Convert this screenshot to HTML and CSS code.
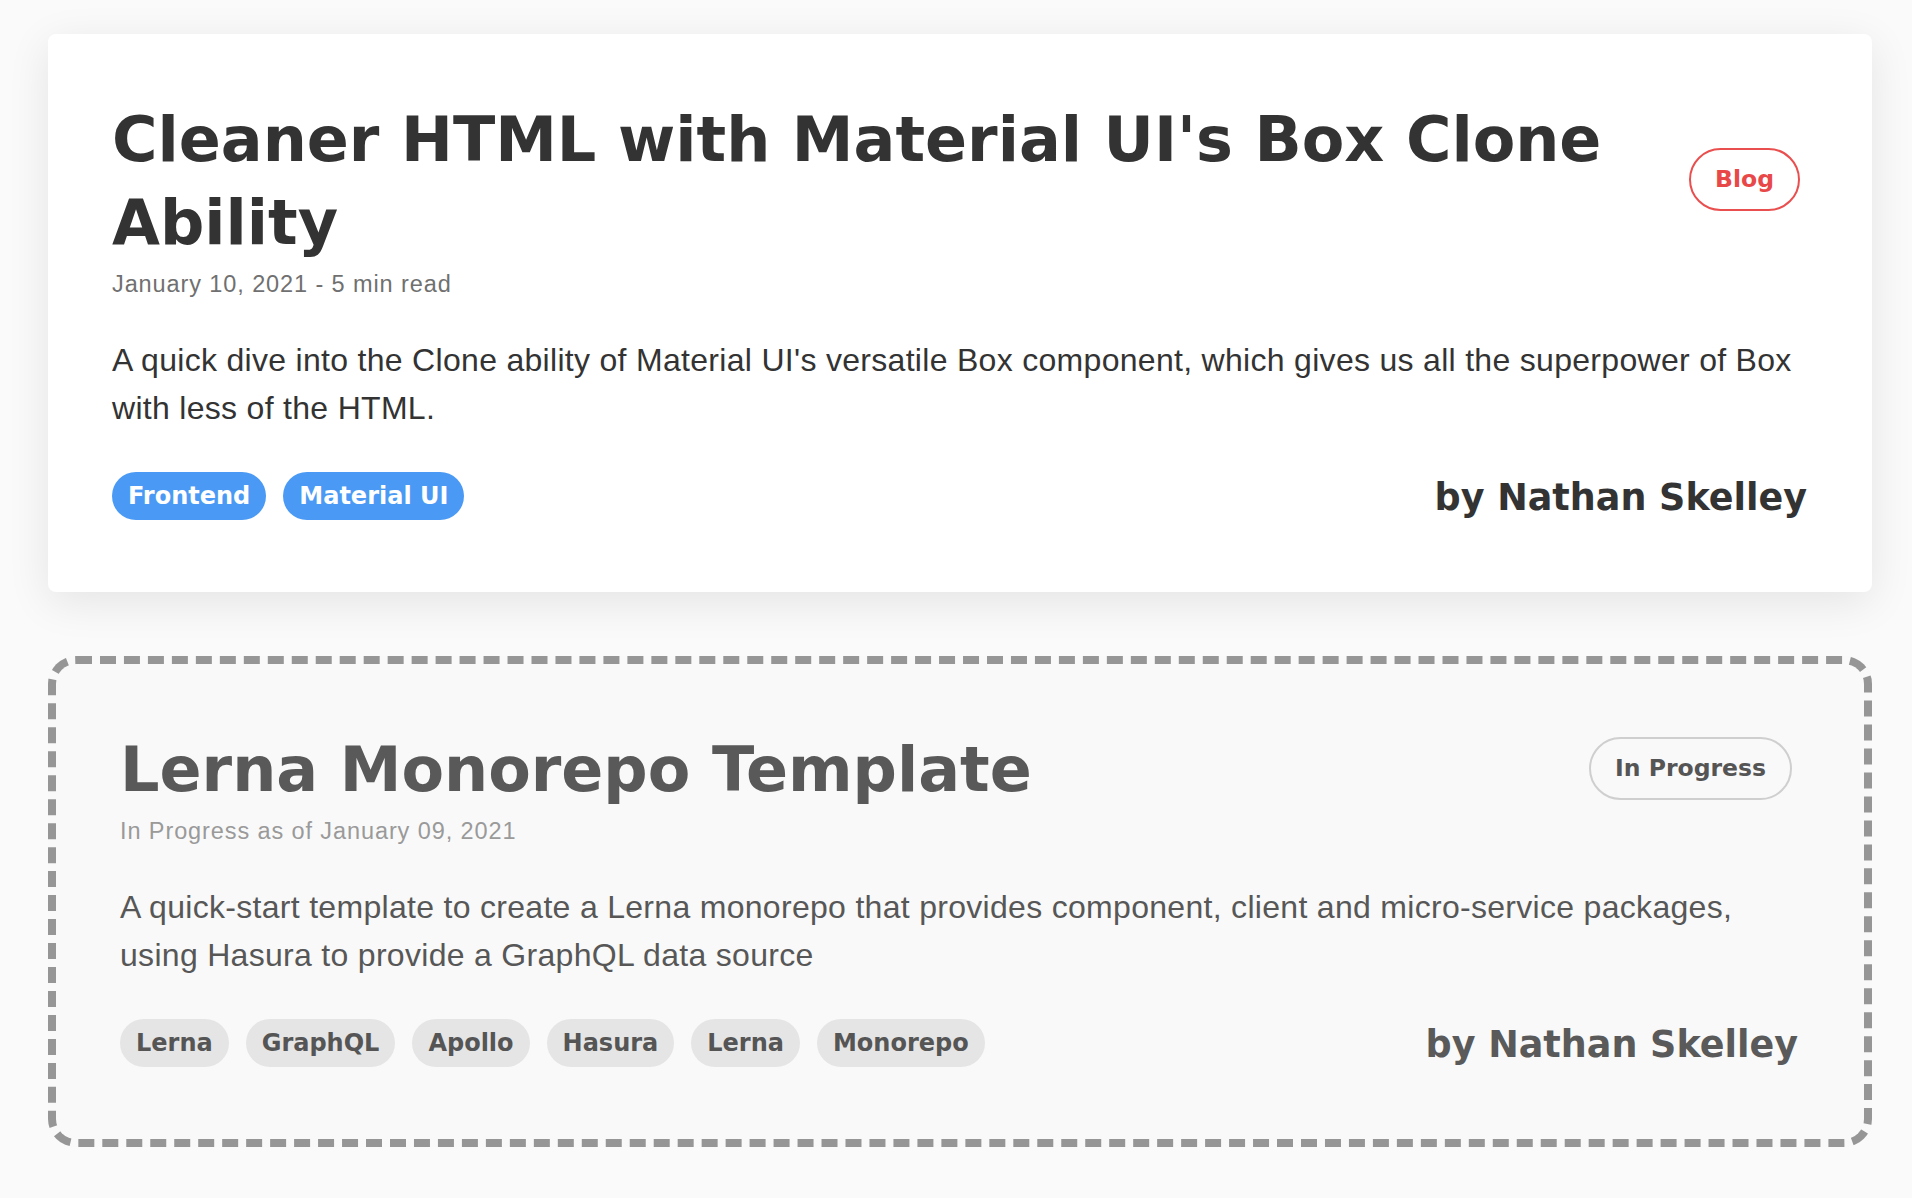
FILE: index.html
```html
<!DOCTYPE html>
<html lang="en">
<head>
<meta charset="utf-8">
<title>Posts</title>
<link rel="stylesheet" href="styles.css">
</head>
<body>
<main class="page">
  <article class="card card--featured">
    <header class="card-head">
      <h1 class="title">Cleaner HTML with Material UI's Box Clone Ability</h1>
      <span class="chip chip--blog">Blog</span>
    </header>
    <p class="meta">January 10, 2021 - 5 min read</p>
    <p class="desc">A quick dive into the Clone ability of Material UI's versatile Box component, which gives us all the superpower of Box with less of the HTML.</p>
    <footer class="card-foot">
      <ul class="tags">
        <li class="tag tag--blue">Frontend</li>
        <li class="tag tag--blue">Material UI</li>
      </ul>
      <span class="author">by Nathan Skelley</span>
    </footer>
  </article>

  <article class="card card--draft">
    <header class="card-head">
      <h1 class="title">Lerna Monorepo Template</h1>
      <span class="chip chip--progress">In Progress</span>
    </header>
    <p class="meta">In Progress as of January 09, 2021</p>
    <p class="desc">A quick-start template to create a Lerna monorepo that provides component, client and micro-service packages, using Hasura to provide a GraphQL data source</p>
    <footer class="card-foot">
      <ul class="tags">
        <li class="tag tag--grey">Lerna</li>
        <li class="tag tag--grey">GraphQL</li>
        <li class="tag tag--grey">Apollo</li>
        <li class="tag tag--grey">Hasura</li>
        <li class="tag tag--grey">Lerna</li>
        <li class="tag tag--grey">Monorepo</li>
      </ul>
      <span class="author">by Nathan Skelley</span>
    </footer>
  </article>
</main>
</body>
</html>
```
FILE: styles.css
```css
* { box-sizing: border-box; }

html, body {
  margin: 0;
  background: #fafafa;
}

body {
  font-family: "Liberation Sans", Arial, sans-serif;
  color: #333;
}

.page {
  padding: 34px 40px 48px 48px;
  display: flex;
  flex-direction: column;
  gap: 64px;
}

.card {
  padding: 64px;
  border-radius: 8px;
}

.card--featured {
  background: #fff;
  box-shadow: 0 10px 44px rgba(0, 0, 0, 0.09);
  color: #333;
}

.card--draft {
  background: #f9f9f9;
  border: 8px dashed #969696;
  border-radius: 28px;
  color: #575757;
}

.card-head {
  display: flex;
  align-items: center;
  justify-content: space-between;
  gap: 40px;
}

.title {
  margin: 0;
  font-family: "DejaVu Sans", Inter, sans-serif;
  font-weight: 700;
  font-size: 62px;
  line-height: 83px;
  letter-spacing: 0;
}

.card--draft .title { color: #595959; }

.chip {
  flex: none;
  margin: 0 8px 3px 0;
  padding: 12px 24px;
  border: 2px solid;
  border-radius: 999px;
  font-family: "DejaVu Sans", Inter, sans-serif;
  font-weight: 700;
  font-size: 23.5px;
  line-height: 35px;
}

.chip--blog {
  color: #e84848;
  border-color: #ea4f4f;
}

.chip--progress {
  color: #555;
  border-color: #cfcfcf;
}

.meta {
  margin: 0;
  font-size: 23.5px;
  line-height: 40px;
  letter-spacing: 0.9px;
  color: #707070;
}

.card--draft .meta { color: #9a9a9a; }

.desc {
  margin: 32px 0 0;
  font-size: 32px;
  line-height: 48px;
  letter-spacing: 0.3px;
}

.card-foot {
  margin-top: 36px;
  display: flex;
  align-items: center;
  justify-content: space-between;
}

.tags {
  list-style: none;
  margin: 0 0 4px;
  padding: 0;
  display: flex;
  gap: 17px;
}

.tag {
  padding: 6px 16px;
  border-radius: 24px;
  font-family: "DejaVu Sans", Inter, sans-serif;
  font-weight: 700;
  font-size: 24px;
  line-height: 36px;
}

.tag--blue {
  background: #4a9af5;
  color: #fff;
}

.tag--grey {
  background: #e5e5e5;
  color: #555;
}

.author {
  font-family: "DejaVu Sans", Inter, sans-serif;
  font-weight: 700;
  font-size: 36.5px;
  line-height: 60px;
  margin-right: 1px;
}

.card--draft .author { color: #5a5a5a; margin-right: 2px; }
```
